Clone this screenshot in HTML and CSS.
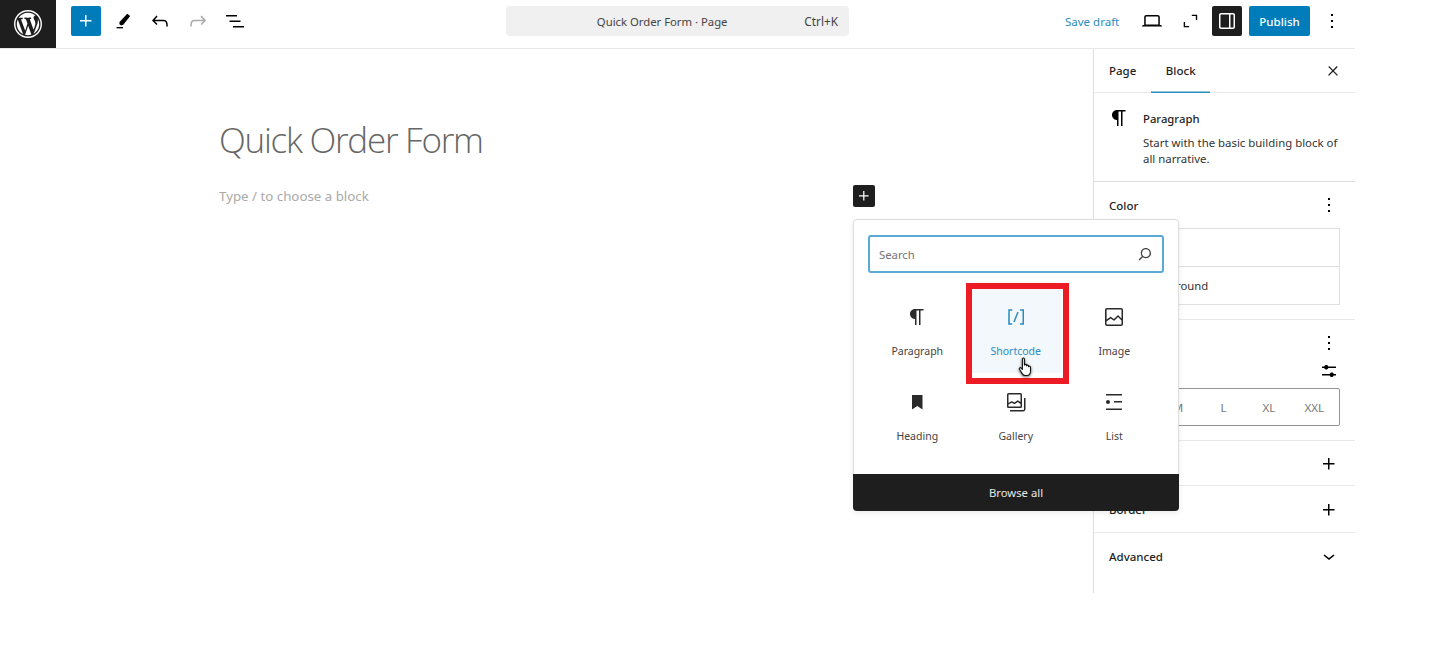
FILE: index.html
```html
<!DOCTYPE html>
<html lang="en">
<head>
<meta charset="utf-8">
<title>Quick Order Form</title>
<link rel="stylesheet" href="styles.css">
</head>
<body>
<div class="app">
  <header class="topbar">
    <div class="logo"><svg width="28" height="28" viewBox="0 0 20 20"><path fill="#fff" d="M20 10c0-5.52-4.48-10-10-10S0 4.48 0 10s4.48 10 10 10 10-4.48 10-10zM10 1.01c4.96 0 8.99 4.03 8.99 8.99s-4.03 8.99-8.99 8.99S1.01 14.96 1.01 10 5.04 1.01 10 1.01zM8.01 14.82L4.96 6.61c.49-.03 1.05-.08 1.05-.08.43-.05.38-1.01-.06-.99 0 0-1.29.1-2.13.1-.15 0-.33 0-.52-.01 1.44-2.17 3.9-3.6 6.7-3.6 2.09 0 3.99.79 5.41 2.09-.6-.08-1.45.35-1.45 1.42 0 .66.38 1.22.79 1.88.31.54.5 1.22.5 2.21 0 1.34-1.27 4.48-1.27 4.48l-2.71-7.5c.48-.03.75-.16.75-.16.43-.05.38-1.1-.05-1.08 0 0-1.3.11-2.14.11-.78 0-2.11-.11-2.11-.11-.43-.02-.48 1.06-.05 1.08l.84.08 1.12 3.04zm6.02 2.15L16.64 10s.67-1.69.39-3.81c.63 1.14.94 2.42.94 3.81 0 2.96-1.56 5.58-3.94 6.97zM2.68 6.77L6.5 17.25c-2.67-1.3-4.47-4.08-4.47-7.25 0-1.16.2-2.23.65-3.23zm7.45 4.53l2.29 6.25c-.75.27-1.57.42-2.42.42-.72 0-1.41-.11-2.06-.3z"/></svg></div>
    <div class="tools">
      <button class="btn-add"><svg width="24" height="24" viewBox="0 0 24 24"><path fill="#fff" d="M11 12.5V17.5H12.5V12.5H17.5V11H12.5V6H11V11H6V12.5H11Z"/></svg></button>
      <span class="tool tool-pen"><svg width="24" height="24" viewBox="0 0 24 24"><path d="M5 20h7v-1.5H5z"/><path d="M16.6 4.2l3.2 2.4-7.5 9.6-2.3.6-1.9-1.4.1-2.3z"/></svg></span>
      <span class="tool"><svg width="24" height="24" viewBox="0 0 24 24"><path d="M18.3 11.7c-.6-.6-1.4-.9-2.3-.9H6.7l2.9-3.3-1.1-1-4.5 5L8.5 16l1-1-2.7-2.7H16c.5 0 .9.2 1.3.5 1 1 1 3.4 1 4.5v.3h1.5v-.2c0-1.5 0-4.3-1.5-5.7z"/></svg></span>
      <span class="tool tool-off"><svg width="24" height="24" viewBox="0 0 24 24"><path d="M15.6 6.5l-1.1 1 2.9 3.3H8c-.9 0-1.7.3-2.3.9-1.4 1.5-1.4 4.2-1.4 5.6v.2h1.5v-.3c0-1.1 0-3.5 1-4.5.3-.3.7-.5 1.3-.5h9.2L14.5 15l1.1 1.1 4.6-4.6-4.6-5z"/></svg></span>
      <span class="tool"><svg width="24" height="24" viewBox="0 0 24 24"><path d="M3 6h11v1.5H3V6Zm3.5 5.5h11V13h-11v-1.5ZM21 17H10v1.5h11V17Z"/></svg></span>
    </div>
    <div class="command-wrap">
      <div class="command"><span class="command-title">Quick Order Form · Page</span><span class="command-key">Ctrl+K</span></div>
    </div>
    <div class="actions">
      <a class="save">Save draft</a>
      <span class="act act-laptop"><svg width="24" height="24" viewBox="0 0 24 24"><path d="M20.5 16h-.7V8c0-1.1-.9-2-2-2H6.2c-1.1 0-2 .9-2 2v8h-.7c-.8 0-1.5.7-1.5 1.5h20c0-.8-.7-1.5-1.5-1.5zM5.7 8c0-.3.2-.5.5-.5h11.6c.3 0 .5.2.5.5v7.6H5.7V8z"/></svg></span>
      <span class="act act-full"><svg width="24" height="24" viewBox="0 0 24 24"><path d="M14 5h6v6h-1.5V6.500H14zM5 13h1.500v4.500H11V19H5z"/></svg></span>
      <span class="btn-panel"><svg width="24" height="24" viewBox="0 0 24 24"><path fill="#fff" d="M18 4H6c-1.1 0-2 .9-2 2v12c0 1.1.9 2 2 2h12c1.1 0 2-.9 2-2V6c0-1.1-.9-2-2-2zm-4 14.5H6c-.3 0-.5-.2-.5-.5V6c0-.3.2-.5.5-.5h8v13zm4.5-.5c0 .3-.2.5-.5.5h-2.5v-13H18c.3 0 .5.2.5.5v12z"/></svg></span>
      <button class="btn-publish">Publish</button>
      <span class="act act-more"><svg width="24" height="24" viewBox="0 0 24 24"><path d="M13 19h-2v-2h2v2zm0-6h-2v-2h2v2zm0-6h-2V5h2v2z"/></svg></span>
    </div>
  </header>

  <div class="workspace">
    <main class="canvas">
      <h1 class="post-title">Quick Order Form</h1>
      <p class="placeholder">Type / to choose a block</p>
    </main>

    <aside class="sidebar">
      <div class="tabs">
        <span class="tab">Page</span>
        <span class="tab tab-active">Block</span>
        <span class="tab-close"><svg width="24" height="24" viewBox="0 0 24 24"><path stroke="#1e1e1e" stroke-width=".6" d="M13 11.8l6.100-6.300-1-1-6.100 6.200-6.100-6.300-1 1 6.100 6.300-6.500 6.700 1 1 6.500-6.600 6.500 6.600 1-1z" transform="translate(4.560 4.560) scale(.62)"/></svg></span>
      </div>
      <section class="card">
        <span class="card-icon"><svg width="24" height="24" viewBox="0 0 24 24"><path d="m9.99609 14v-.2251l.00391.0001v6.225h1.5v-14.5h2.5v14.5h1.5v-14.5h3v-1.5h-8.50391c-2.76142 0-5 2.23858-5 5 0 2.7614 2.23858 5 5 5z"/></svg></span>
        <div>
          <h2 class="card-title">Paragraph</h2>
          <p class="card-text">Start with the basic building block of all narrative.</p>
        </div>
      </section>
      <section class="panel panel-color">
        <div class="panel-head"><span>Color</span><svg width="24" height="24" viewBox="0 0 24 24"><path d="M13 19h-2v-2h2v2zm0-6h-2v-2h2v2zm0-6h-2V5h2v2z"/></svg></div>
        <div class="color-list">
          <div class="color-row">Text</div>
          <div class="color-row">Background</div>
        </div>
      </section>
      <section class="panel panel-type" aria-label="Typography">
        <div class="panel-head panel-head-end"><svg width="24" height="24" viewBox="0 0 24 24"><path d="M13 19h-2v-2h2v2zm0-6h-2v-2h2v2zm0-6h-2V5h2v2z"/></svg></div>
        <div class="size-head"><span>Size</span><svg width="24" height="24" viewBox="0 0 24 24"><path d="M19 7.5h-7.6c-.3-.9-1.1-1.5-2.1-1.5s-1.8.6-2.1 1.5H5V9h2.1c.3.9 1.2 1.5 2.2 1.5s1.8-.6 2.1-1.5H19V7.5zM19 15h-2.1c-.3-.9-1.1-1.5-2.1-1.5s-1.8.6-2.1 1.5H5v1.5h7.6c.3.9 1.1 1.5 2.1 1.5s1.8-.6 2.1-1.5H19V15z"/></svg></div>
        <div class="sizes"><span>S</span><span>M</span><span>L</span><span>XL</span><span>XXL</span></div>
      </section>
      <section class="row row-dim"><span>Dimensions</span><svg width="24" height="24" viewBox="0 0 24 24"><path d="M11 12.5V17.5H12.5V12.5H17.5V11H12.5V6H11V11H6V12.5H11Z"/></svg></section>
      <section class="row row-border"><span>Border</span><svg width="24" height="24" viewBox="0 0 24 24"><path d="M11 12.5V17.5H12.5V12.5H17.5V11H12.5V6H11V11H6V12.5H11Z"/></svg></section>
      <section class="row row-adv"><span>Advanced</span><svg width="24" height="24" viewBox="0 0 24 24"><path d="M17.5 11.6L12 16l-5.5-4.400.9-1.200L12 14l4.500-3.600 1 1.200z"/></svg></section>
    </aside>
  </div>

  <button class="block-add"><svg width="20" height="20" viewBox="0 0 24 24"><path fill="#fff" d="M11 12.5V17.5H12.5V12.5H17.5V11H12.5V6H11V11H6V12.5H11Z"/></svg></button>

  <div class="inserter">
    <div class="search"><span>Search</span><svg width="24" height="24" viewBox="0 0 24 24"><path d="M13 5c-3.3 0-6 2.7-6 6 0 1.4.5 2.7 1.3 3.7l-3.8 3.8 1.1 1.1 3.8-3.8c1 .8 2.3 1.3 3.7 1.3 3.3 0 6-2.7 6-6S16.3 5 13 5zm0 10.5c-2.5 0-4.5-2-4.5-4.5s2-4.5 4.5-4.5 4.5 2 4.5 4.5-2 4.5-4.5 4.5z"/></svg></div>
    <div class="blocks">
      <div class="block"><svg width="24" height="24" viewBox="0 0 24 24"><path d="m9.99609 14v-.2251l.00391.0001v6.225h1.5v-14.5h2.5v14.5h1.5v-14.5h3v-1.5h-8.50391c-2.76142 0-5 2.23858-5 5 0 2.7614 2.23858 5 5 5z"/></svg><span>Paragraph</span></div>
      <div class="block block-hover"><svg width="24" height="24" viewBox="0 0 24 24"><path d="M16 4.2v1.5h2.5v12.5H16v1.5h4V4.2h-4zM4.2 19.8h4v-1.5H5.8V5.8h2.5V4.2h-4l-.1 15.6zm5.1-3.1l1.4.6 4-10-1.4-.6-4 10z"/></svg><span>Shortcode</span></div>
      <div class="block"><svg width="24" height="24" viewBox="0 0 24 24"><path d="M19 3H5c-1.1 0-2 .9-2 2v14c0 1.1.9 2 2 2h14c1.1 0 2-.9 2-2V5c0-1.1-.9-2-2-2zM5 4.5h14c.3 0 .5.2.5.5v8.4l-3-2.9c-.3-.3-.8-.3-1 0L11.9 14 9 12c-.3-.2-.6-.2-.8 0l-3.6 2.6V5c-.1-.3.1-.5.4-.5zm14 15H5c-.3 0-.5-.2-.5-.5v-2.4l4.1-3 3 1.9c.3.2.7.2.9-.1L16 12l3.5 3.4V19c0 .3-.2.5-.5.5z"/></svg><span>Image</span></div>
      <div class="block"><svg width="24" height="24" viewBox="0 0 24 24"><path d="M7 5h10.500v14.500l-5.200-3.600-5.300 3.600z"/></svg><span>Heading</span></div>
      <div class="block"><svg width="24" height="24" viewBox="0 0 24 24"><path fill-rule="evenodd" clip-rule="evenodd" d="M16.375 4.5H4.625a.125.125 0 0 0-.125.125v8.254l2.859-1.54a.75.75 0 0 1 .68-.016l2.384 1.142 2.89-2.074a.75.75 0 0 1 .874 0l2.313 1.66V4.625a.125.125 0 0 0-.125-.125Zm.125 9.398-2.75-1.975-2.813 2.02a.75.75 0 0 1-.76.067l-2.444-1.17L4.5 14.583v1.792c0 .069.056.125.125.125h11.75a.125.125 0 0 0 .125-.125v-2.477ZM4.625 3C3.728 3 3 3.728 3 4.625v11.75C3 17.273 3.728 18 4.625 18h11.75c.898 0 1.625-.727 1.625-1.625V4.625C18 3.728 17.273 3 16.375 3H4.625ZM20 8v11c0 .69-.31 1-.999 1H6v1.5h13.001c1.52 0 2.499-.982 2.499-2.500V8H20Z"/></svg><span>Gallery</span></div>
      <div class="block"><svg width="24" height="24" viewBox="0 0 24 24"><path d="M4 4v1.5h16V4H4zm8 8.5h8V11h-8v1.500zM4 20h16v-1.500H4V20zm4-8c0-1.100-.9-2-2-2s-2 .9-2 2 .9 2 2 2 2-.9 2-2z"/></svg><span>List</span></div>
    </div>
    <div class="browse">Browse all</div>
  </div>

  <div class="highlight"></div>
  <svg class="cursor" width="16" height="22" viewBox="0 0 16 22"><path fill="#fff" stroke="#111" stroke-width="1.1" stroke-linejoin="round" d="M4.4 1.9c0-1.3 2-1.3 2 0v6.3c.2-1.1 2-1.1 2.1.1v.5c.3-1 2-.9 2.1.3v.6c.4-.8 1.9-.6 1.9.6v3.7c0 2.600-1.500 4.500-3.800 4.500H7.300c-1.500 0-2.400-.7-3.100-1.900L1.500 12.300c-.7-1.200.8-2.200 1.700-1.200l1.200 1.400z"/></svg>
</div>
</body>
</html>
```
FILE: styles.css
```css
* { box-sizing: border-box; }
html, body { margin: 0; padding: 0; background: #fff; }
body { font-family: "Noto Sans", "Open Sans", sans-serif; color: #1e1e1e; font-size: 12px; }
button { font-family: inherit; border: 0; padding: 0; }
svg { display: block; flex: none; }
h1, h2, p { margin: 0; }

.app { position: relative; width: 1355px; height: 593px; overflow: hidden; background: #fff; }

.topbar { display: flex; align-items: flex-start; height: 49px; border-bottom: 1px solid #e8e8e8; }
.logo { width: 56px; height: 48px; background: #1e1e1e; display: flex; align-items: center; justify-content: center; }
.tools, .command-wrap, .actions { height: 30px; margin-top: 6px; }
.tools { display: flex; align-items: center; width: 200px; padding-left: 15px; }
.btn-add { width: 30px; height: 30px; background: #007cba; border-radius: 2px; display: flex; align-items: center; justify-content: center; margin-right: 3px; }
.tool { width: 37.500px; display: flex; justify-content: center; }
.tool-off svg { fill: #aaa; }
.tool-pen svg { transform: scale(.92); }
.command-wrap { width: 593px; padding-left: 250px; }
.command { width: 343px; height: 30px; background: #f0f0f0; border-radius: 4px; display: flex; align-items: center; font-size: 11.300px; color: #444; }
.command-title { flex: 1; text-align: center; padding-left: 14px; }
.command-key { padding-right: 11px; font-size: 11.800px; }
.actions { display: flex; align-items: center; flex: 1; padding-left: 216px; }
.save { color: #2b8cc0; font-size: 11.500px; width: 54px; white-space: nowrap; }
.act { width: 24px; display: flex; justify-content: center; }
.act-laptop { margin-left: 21px; }
.act-full { margin-left: 14px; }
.act-full svg { transform: scale(.9); }
.act-more { margin-left: 10px; }
.btn-panel { width: 30px; height: 30px; margin-left: 10px; background: #1e1e1e; border-radius: 2px; display: flex; align-items: center; justify-content: center; }
.btn-publish { width: 61px; height: 30px; margin-left: 7px; background: #007cba; border-radius: 2px; color: #fff; font-size: 11.500px; font-weight: 500; }

.workspace { display: flex; height: 544px; }
.canvas { flex: 1; padding: 68px 0 0 219px; }
.post-title { font-family: "Open Sans", "Noto Sans", sans-serif; font-weight: 300; font-size: 35px; line-height: 46px; color: #666; letter-spacing: -1.250px; }
.placeholder { font-size: 13.300px; line-height: 20px; color: #aaa; margin-top: 23px; }

.sidebar { width: 262px; border-left: 1px solid #e0e0e0; }
.tabs { display: flex; align-items: center; height: 44px; border-bottom: 1px solid #e8e8e8; font-size: 11.500px; font-weight: 500; padding-left: 15px; }
.tab { height: 44px; display: flex; align-items: center; }
.tab-active { margin-left: 15px; padding: 0 14.500px; box-shadow: inset 0 -1.500px #2b8cc0; }
.tab-close { margin-left: auto; margin-right: 10px; }

.card { display: flex; height: 89px; padding: 13px 12px 0 13px; border-bottom: 1px solid #e0e0e0; }
.card-icon { width: 24px; margin-right: 12px; }
.card-title { font-size: 11.300px; font-weight: 500; line-height: 18px; margin-top: 4px; color: #1e1e1e; }
.card-text { font-size: 11.400px; line-height: 16px; margin-top: 7px; color: #333; }

.panel { padding: 0 15px; border-bottom: 1px solid #e8e8e8; }
.panel-color { height: 138px; }
.panel-type { height: 121px; }
.panel-head, .size-head, .row { display: flex; align-items: center; justify-content: space-between; font-size: 11.500px; font-weight: 500; }
.panel-head { height: 46px; }
.panel-head-end { justify-content: flex-end; }
.panel-head svg, .size-head svg { margin-right: -1px; }
.color-list { border: 1px solid #e0e0e0; }
.color-row { height: 38px; display: flex; align-items: center; padding-left: 34px; font-size: 11.300px; font-weight: 400; color: #333; }
.color-row + .color-row { border-top: 1px solid #e0e0e0; }
.color-row:first-child { height: 37px; }
.size-head { height: 22px; margin-top: -6px; font-weight: 400; }
.sizes { display: grid; grid-template-columns: repeat(5, 45.400px); height: 38px; margin-top: 6px; border: 1px solid #949494; border-radius: 2px; align-items: center; justify-items: center; color: #777; font-size: 11.500px; }
.row { padding: 0 15px; border-bottom: 1px solid #e8e8e8; }
.row svg { margin-right: -1px; }
.row-dim { height: 45px; padding-top: 1px; }
.row-border { height: 47px; padding-top: 1px; }
.row-adv { height: 47px; border-bottom: 0; padding-bottom: 1px; }

.block-add { position: absolute; left: 853px; top: 185px; width: 22px; height: 22px; background: #1e1e1e; border-radius: 2px; display: flex; align-items: center; justify-content: center; }

.inserter { position: absolute; left: 853px; top: 219px; width: 326px; height: 292px; background: #fff; border: 1px solid #ddd; border-radius: 4px; box-shadow: 0 2px 6px rgba(0,0,0,.08); display: flex; flex-direction: column; z-index: 2; }
.search { margin: 15px 14px 0; height: 38px; border: 2px solid #5aa9d6; border-radius: 3px; display: flex; align-items: center; justify-content: space-between; padding: 0 5px 0 9px; font-size: 11.300px; color: #757575; }
.search svg { fill: #444; transform: scale(.85); }
.blocks { display: grid; grid-template-columns: repeat(3, 98.500px); grid-auto-rows: 85px; margin: 16px 0 0 14px; flex: 1; }
.block { display: flex; flex-direction: column; align-items: center; font-size: 10.500px; color: #444; padding-top: 15px; }
.block svg { fill: #2a2a2a; margin-top: 1px; }
.block span { margin-top: 14px; line-height: 16px; }
.block-hover { color: #2b8cc0; background: #f2f8fb; margin: 0 4.500px; height: 84px; }
.block-hover svg { fill: #2b8cc0; }
.browse { height: 37px; margin: 0 -1px -1px; background: #1e1e1e; color: #e8e8e8; border-radius: 0 0 4px 4px; display: flex; align-items: center; justify-content: center; font-size: 11.300px; }

.highlight { position: absolute; left: 966px; top: 283px; width: 103px; height: 101px; border: 6px solid #ed1c24; z-index: 3; }
.cursor { position: absolute; left: 1018px; top: 357px; z-index: 4; filter: drop-shadow(0 1px 1.500px rgba(0,0,0,.6)); }
```
